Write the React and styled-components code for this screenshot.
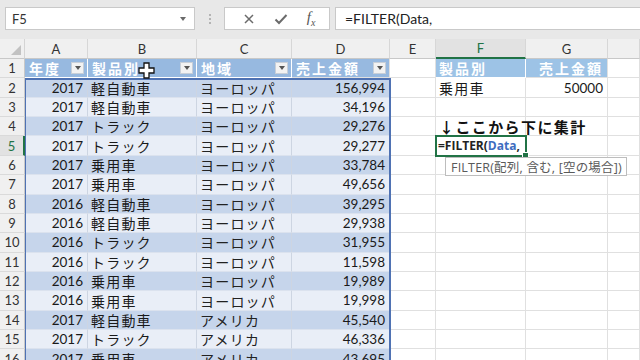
import React from 'react';
import styled, { createGlobalStyle } from 'styled-components';

const GlobalStyle = createGlobalStyle`
  html, body {
    margin: 0;
    padding: 0;
    background: #ffffff;
    overflow: hidden;
  }
  body {
    font-family: Lato, "Noto Sans CJK JP", sans-serif;
  }
`;

const JP = `"Noto Sans CJK JP", "Noto Sans", sans-serif`;
const ROW_H = 19.36;

const Frame = styled.div`
  position: relative;
  width: 640px;
  height: 360px;
  overflow: hidden;
  background: #ffffff;
`;

const FormulaBar = styled.div`
  display: flex;
  align-items: flex-start;
  height: 39px;
  box-sizing: border-box;
  padding-top: 7px;
  background: #e8e8e8;
`;

const Box = styled.div`
  display: flex;
  align-items: center;
  height: 23px;
  box-sizing: border-box;
  background: #ffffff;
  border: 1px solid #c9c9c9;
`;

const NameBox = styled(Box)`
  width: 190px;
  margin-left: 5px;
  padding: 0 8px 0 6px;
  justify-content: space-between;
  font-size: 13px;
  color: #333;
`;

const Caret = styled.span`
  width: 0;
  height: 0;
  border-left: 3.5px solid transparent;
  border-right: 3.5px solid transparent;
  border-top: 4px solid #6a6a6a;
`;

const Grip = styled.div`
  display: flex;
  flex-direction: column;
  align-items: center;
  justify-content: center;
  gap: 2px;
  width: 29px;
  height: 23px;
  span {
    width: 2px;
    height: 2px;
    background: #b4b4b4;
  }
`;

const FxBox = styled(Box)`
  width: 106px;
  justify-content: space-around;
  padding: 0 4px 0 8px;
  color: #6e6e6e;
`;

const Fx = styled.span`
  font-family: "Liberation Serif", serif;
  font-style: italic;
  font-size: 15px;
  color: #555;
  sub {
    font-size: 10px;
  }
`;

const FormulaInput = styled(Box)`
  flex: 1;
  margin-left: 5px;
  border-right: none;
  padding-left: 9px;
  font-size: 14px;
  color: #222;
`;

const Sheet = styled.div`
  display: grid;
  grid-template-columns: 25px 63px 109px 95px 98px 46px 90px 82px 1fr;
  grid-template-rows: 20px repeat(16, ${ROW_H}px);
`;

const Corner = styled.div`
  position: relative;
  background: #f0f0f0;
  border-right: 1px solid #d4d4d4;
  border-bottom: 1px solid #c8c8c8;
  &::after {
    content: '';
    position: absolute;
    right: 3px;
    bottom: 3px;
    border-left: 10px solid transparent;
    border-bottom: 10px solid #c2c2c2;
  }
`;

const ColHead = styled.div`
  display: flex;
  align-items: center;
  justify-content: center;
  font-size: 13px;
  color: ${(p) => (p.$active ? '#217346' : '#333')};
  background: ${(p) => (p.$active ? '#e2e2e2' : '#f0f0f0')};
  border-right: 1px solid #d7d7d7;
  border-bottom: ${(p) => (p.$active ? '2px solid #217346' : '1px solid #c8c8c8')};
  box-sizing: border-box;
`;

const RowHead = styled.div`
  display: flex;
  align-items: center;
  justify-content: center;
  font-size: 13px;
  color: ${(p) => (p.$active ? '#217346' : '#333')};
  background: ${(p) => (p.$active ? '#e2e2e2' : '#f0f0f0')};
  border-right: ${(p) => (p.$active ? '2px solid #217346' : '1px solid #c8c8c8')};
  border-bottom: 1px solid #dadada;
  box-sizing: border-box;
`;

const Cell = styled.div`
  display: flex;
  align-items: center;
  justify-content: ${(p) => (p.$align === 'right' ? 'flex-end' : 'flex-start')};
  padding: 0 ${(p) => (p.$align === 'right' ? '4px' : '3px')};
  box-sizing: border-box;
  background: ${(p) => p.$bg || '#ffffff'};
  border-right: 1px solid ${(p) => p.$line || '#e0e0e0'};
  border-bottom: 1px solid ${(p) => p.$hline || p.$line || '#e0e0e0'};
  font-family: ${(p) => (p.$jp ? JP : 'Lato, sans-serif')};
  font-size: ${(p) => (p.$jp ? '14px' : '13.5px')};
  font-weight: ${(p) => (p.$bold ? 700 : 400)};
  letter-spacing: ${(p) => (p.$jp ? '1.2px' : '0')};
  color: ${(p) => p.$color || '#1a1a1a'};
  white-space: nowrap;
  overflow: visible;
  position: relative;
  z-index: ${(p) => (p.$over ? 2 : 1)};
`;

const HeadCell = styled(Cell)`
  justify-content: space-between;
  padding: 0 3px 0 4px;
  letter-spacing: 2px;
`;

const FilterBtn = styled.span`
  display: flex;
  align-items: center;
  justify-content: center;
  width: 13px;
  height: 12px;
  background: #f2f2f2;
  border: 1px solid #c8cfd8;
  box-sizing: border-box;
  &::after {
    content: '';
    border-left: 3px solid transparent;
    border-right: 3px solid transparent;
    border-top: 4px solid #555;
  }
`;

const Note = styled.span`
  font-family: ${JP};
  font-weight: 700;
  font-size: 15px;
  letter-spacing: 1.4px;
  color: #111;
`;

const Typing = styled.span`
  font-family: "Open Sans", Lato, sans-serif;
  font-weight: 700;
  font-size: 12px;
  color: #222;
  b {
    font-weight: 700;
    color: #3e6dbf;
  }
`;

const RangeFrame = styled.div`
  position: absolute;
  left: 25px;
  top: ${39 + 20 + ROW_H}px;
  width: 366px;
  height: 300px;
  box-sizing: border-box;
  border: 2px solid #4f72b3;
  border-left-width: 1px;
  z-index: 3;
  pointer-events: none;
`;

const ActiveFrame = styled.div`
  position: absolute;
  left: 435px;
  top: ${39 + 20 + ROW_H * 4 - 1}px;
  width: 92px;
  height: ${ROW_H + 2}px;
  box-sizing: border-box;
  border: 2px solid #217346;
  z-index: 3;
  &::after {
    content: '';
    position: absolute;
    right: -4px;
    bottom: -4px;
    width: 5px;
    height: 5px;
    background: #217346;
    border: 1px solid #ffffff;
  }
`;

const Tooltip = styled.div`
  position: absolute;
  left: 445px;
  top: 157px;
  height: 19px;
  box-sizing: border-box;
  padding: 0 4px 0 5px;
  display: flex;
  align-items: center;
  background: #ffffff;
  border: 1px solid #bdbdbd;
  font-family: "Open Sans", ${JP};
  font-size: 12.5px;
  letter-spacing: 0.2px;
  color: #5a5a5a;
  white-space: nowrap;
  z-index: 4;
`;

const Cursor = styled.svg`
  position: absolute;
  left: 138px;
  top: 62px;
  z-index: 5;
`;

const cols = ['A', 'B', 'C', 'D', 'E', 'F', 'G', ''];

const data = [
  [2017, '軽自動車', 'ヨーロッパ', '156,994'],
  [2017, '軽自動車', 'ヨーロッパ', '34,196'],
  [2017, 'トラック', 'ヨーロッパ', '29,276'],
  [2017, 'トラック', 'ヨーロッパ', '29,277'],
  [2017, '乗用車', 'ヨーロッパ', '33,784'],
  [2017, '乗用車', 'ヨーロッパ', '49,656'],
  [2016, '軽自動車', 'ヨーロッパ', '39,295'],
  [2016, '軽自動車', 'ヨーロッパ', '29,938'],
  [2016, 'トラック', 'ヨーロッパ', '31,955'],
  [2016, 'トラック', 'ヨーロッパ', '11,598'],
  [2016, '乗用車', 'ヨーロッパ', '19,989'],
  [2016, '乗用車', 'ヨーロッパ', '19,998'],
  [2017, '軽自動車', 'アメリカ', '45,540'],
  [2017, 'トラック', 'アメリカ', '46,336'],
  [2017, '乗用車', 'アメリカ', '43,695'],
];

const HEAD_BG = '#97b9e0';
const BAND_DARK = '#c6d5eb';
const BAND_LIGHT = '#e9eef7';
const TABLE_LINE = '#cdd5e2';
const SIDE_HEAD = '#9dc3e6';

// cells right of the table (E..H) for a given row number
const sideCells = (n) => {
  const out = [<Cell key="e" />];
  if (n === 1) {
    out.push(
      <Cell key="f" $jp $bold $bg={SIDE_HEAD} $line="#ffffff" $color="#ffffff" style={{ letterSpacing: '2px' }}>製品別</Cell>,
      <Cell key="g" $jp $bold $bg={SIDE_HEAD} $align="right" $line="#e0e0e0" $color="#ffffff" style={{ letterSpacing: '2px' }}>売上金額</Cell>
    );
  } else if (n === 2) {
    out.push(<Cell key="f" $jp>乗用車</Cell>, <Cell key="g" $align="right">50000</Cell>);
  } else if (n === 4) {
    out.push(
      <Cell key="f" $over><Note>↓ここから下に集計</Note></Cell>,
      <Cell key="g" />
    );
  } else if (n === 5) {
    out.push(
      <Cell key="f" $over style={{ paddingLeft: '2px' }}>
        <Typing>=FILTER(<b>Data</b>,</Typing>
      </Cell>,
      <Cell key="g" />
    );
  } else {
    out.push(<Cell key="f" />, <Cell key="g" />);
  }
  out.push(<Cell key="h" />);
  return out;
};

const App = () => {
  return (
    <Frame>
      <GlobalStyle />
      <FormulaBar>
        <NameBox>
          <span>F5</span>
          <Caret />
        </NameBox>
        <Grip>
          <span />
          <span />
          <span />
        </Grip>
        <FxBox>
          <svg width="12" height="12" viewBox="0 0 12 12">
            <path d="M2 2 L10 10 M10 2 L2 10" stroke="#6b6b6b" strokeWidth="1.5" fill="none" />
          </svg>
          <svg width="14" height="12" viewBox="0 0 14 12">
            <path d="M1.5 6.5 L5 10 L12.5 2" stroke="#6b6b6b" strokeWidth="2" fill="none" />
          </svg>
          <Fx>f<sub>x</sub></Fx>
        </FxBox>
        <FormulaInput>=FILTER(Data,</FormulaInput>
      </FormulaBar>

      <Sheet>
        <Corner />
        {cols.map((c, i) => (
          <ColHead key={i} $active={c === 'F'}>{c}</ColHead>
        ))}

        <RowHead>1</RowHead>
        <HeadCell $jp $bold $bg={HEAD_BG} $line="#ffffff" $color="#ffffff"><span>年度</span><FilterBtn /></HeadCell>
        <HeadCell $jp $bold $bg={HEAD_BG} $line="#ffffff" $color="#ffffff"><span>製品別</span><FilterBtn /></HeadCell>
        <HeadCell $jp $bold $bg={HEAD_BG} $line="#ffffff" $color="#ffffff"><span>地域</span><FilterBtn /></HeadCell>
        <HeadCell $jp $bold $bg={HEAD_BG} $line="#e0e0e0" $color="#ffffff"><span>売上金額</span><FilterBtn /></HeadCell>
        {sideCells(1)}

        {data.map((r, i) => {
          const n = i + 2;
          const bg = n % 2 === 0 ? BAND_DARK : BAND_LIGHT;
          return (
            <React.Fragment key={n}>
              <RowHead $active={n === 5}>{n}</RowHead>
              <Cell $align="right" $bg={bg} $line={TABLE_LINE} $hline="#dbe2ee">{r[0]}</Cell>
              <Cell $jp $bg={bg} $line={TABLE_LINE} $hline="#dbe2ee">{r[1]}</Cell>
              <Cell $jp $bg={bg} $line={TABLE_LINE} $hline="#dbe2ee" $color="#222">{r[2]}</Cell>
              <Cell $align="right" $bg={bg} $line={TABLE_LINE} $hline="#dbe2ee">{r[3]}</Cell>
              {sideCells(n)}
            </React.Fragment>
          );
        })}
      </Sheet>

      <RangeFrame />
      <ActiveFrame />
      <Tooltip>FILTER(配列, 含む, [空の場合])</Tooltip>

      <Cursor width="17" height="17" viewBox="0 0 17 17">
        <path
          d="M6 1 H11 V6 H16 V11 H11 V16 H6 V11 H1 V6 H6 Z"
          fill="#ffffff"
          stroke="#111"
          strokeWidth="1.3"
        />
      </Cursor>
    </Frame>
  );
};

export default App;
